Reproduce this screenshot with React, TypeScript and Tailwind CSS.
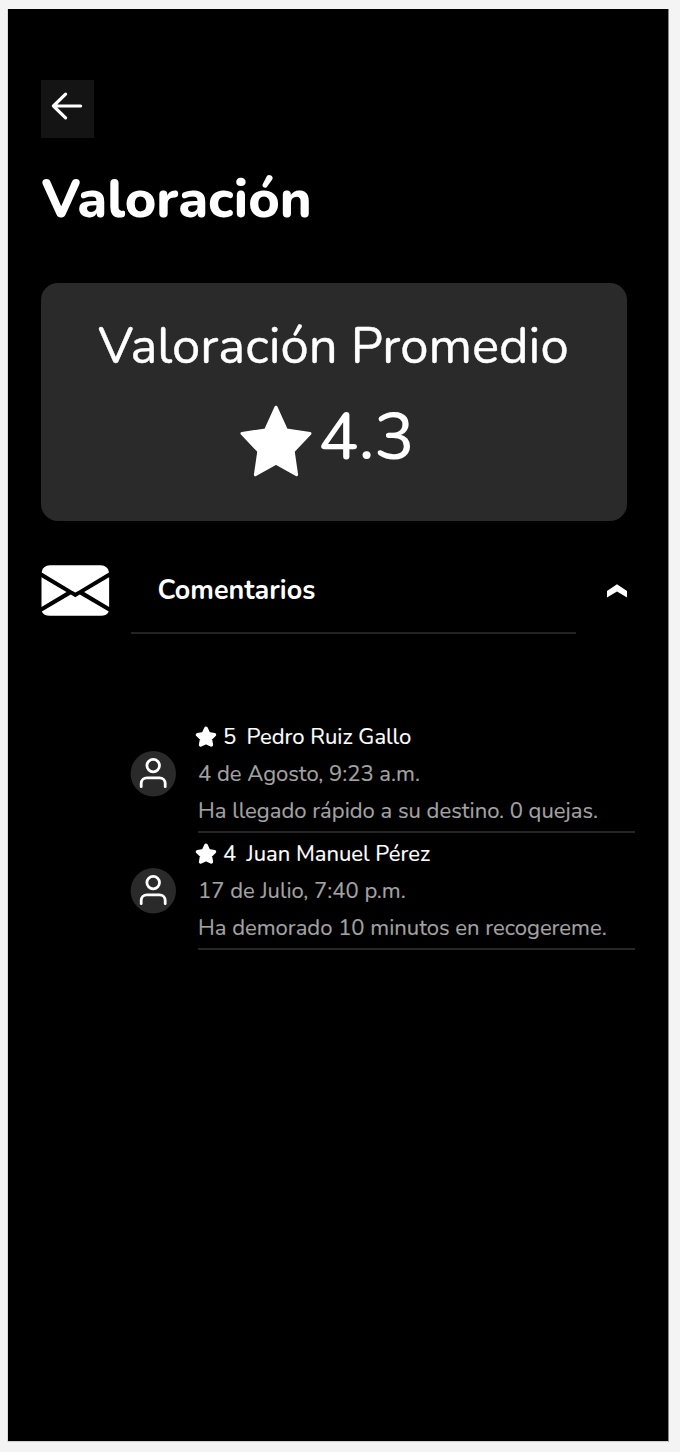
type Comment = {
  score: number;
  name: string;
  date: string;
  text: string;
};

const comments: Comment[] = [
  {
    score: 5,
    name: "Pedro Ruiz Gallo",
    date: "4 de Agosto, 9:23 a.m.",
    text: "Ha llegado rápido a su destino. 0 quejas.",
  },
  {
    score: 4,
    name: "Juan Manuel Pérez",
    date: "17 de Julio, 7:40 p.m.",
    text: "Ha demorado 10 minutos en recogereme.",
  },
];

function ArrowLeftIcon() {
  return (
    <svg width="32" height="30" viewBox="0 0 32 30" fill="none" stroke="white" strokeWidth="3.2" strokeLinecap="round" strokeLinejoin="round">
      <path d="M14.6 3.2 2.4 15l12.2 11.8M2.4 15h27.2" />
    </svg>
  );
}

function BigStar() {
  return (
    <svg width="72" height="72" viewBox="0 0 72 72" fill="white" stroke="white" strokeWidth="3" strokeLinejoin="round">
      <path d="M36 2.2 46.4 25 70 28.4 53.2 46.2 56.6 69.7 36 58.2 15.4 69.7 18.8 46.2 2 28.4 25.6 25Z" />
    </svg>
  );
}

function SmallStar() {
  return (
    <svg className="-mt-px shrink-0" width="22" height="22" viewBox="0 0 22 22" fill="white" stroke="white" strokeWidth="3.6" strokeLinejoin="round">
      <path d="M11 2.4 13.6 7.8 19.4 8.7 15.3 12.8 16.3 18.9 11 16.3 5.7 18.9 6.7 12.8 2.6 8.7 8.4 7.8Z" />
    </svg>
  );
}

function EnvelopeIcon() {
  return (
    <svg width="69" height="51" viewBox="-.5 0 69 51">
      <path fill="white" d="M.2 7.5C.6 3.2 4 .2 8.4.2h50.8c4.4 0 7.8 3 8.2 7.3L38 25.3 33.8 27.6 29.6 25.3Z" />
      <path fill="white" d="M0 12.2 25 27 0 42Z" />
      <path fill="white" d="M67.6 12.2 42.6 27 67.6 42Z" />
      <path fill="white" d="M.3 46.5 29.3 29.6 33.8 32.2l4.5-2.6 29 16.9c-1 2.8-3.9 4.3-8 4.3H8.4C4.2 50.8 1.3 49.3.3 46.5Z" />
    </svg>
  );
}

function ChevronUpIcon() {
  return (
    <svg width="20" height="14" viewBox="0 0 20 14" fill="white">
      <path d="M0 7 10 .2 20 7v6.4L10 7.4 0 13.4Z" />
    </svg>
  );
}

function Avatar() {
  return (
    <svg className="shrink-0" width="46" height="46" viewBox="0 0 46 46" fill="none">
      <circle cx="23.3" cy="22.8" r="22.7" fill="#2a2a2a" />
      <circle cx="23.2" cy="14.6" r="6.3" stroke="white" strokeWidth="2.8" />
      <path d="M11.2 35.7v-3.2c0-3.3 2.4-5.7 5.8-5.7h12.4c3.4 0 5.8 2.4 5.8 5.7v3.2" stroke="white" strokeWidth="2.8" strokeLinecap="round" />
    </svg>
  );
}

function CommentRow({ score, name, date, text }: Comment) {
  return (
    <li className="flex h-[117.2px] items-start">
      <div className="pt-[33px]">
        <Avatar />
      </div>
      <div className="ml-[22px] flex w-[437px] flex-col border-b-[2px] border-[#262626] pt-px pb-px text-[22.05px] leading-[37px] whitespace-nowrap text-[#a3a3a3] [-webkit-text-stroke:0.15px_currentColor]">
        <div className="-ml-[3px] flex items-center text-white">
          <SmallStar />
          <span className="ml-[6px] w-[23.5px]">{score}</span>
          <span>{name}</span>
        </div>
        <p>{date}</p>
        <p>{text}</p>
      </div>
    </li>
  );
}

export default function App() {
  return (
    <div className="h-[1452px] bg-[#f4f4f4] pt-[9px] pl-[7px] font-['Nunito','Lato',sans-serif] text-white">
      <main className="flex h-[1433px] w-[662px] flex-col border-r border-b border-l border-r-[#888888] border-b-[#cfcfcf] border-l-[#dadada] bg-black">
        <header className="pt-[71px] pl-[33px]">
          <button type="button" aria-label="Volver" className="flex h-[58px] w-[53px] justify-start bg-[#141414] pt-[11px] pl-[10px]">
            <ArrowLeftIcon />
          </button>
          <h1 className="mt-[32px] ml-[0.5px] text-[53.7px] leading-[60px] font-extrabold">Valoración</h1>
        </header>

        <section className="mt-[53px] ml-[33.4px] flex h-[238px] w-[585.2px] flex-col items-center rounded-[17px] bg-[#2a2a2a] pt-[29px]">
          <h2 className="-ml-px text-[50.8px] leading-[70px] whitespace-nowrap [-webkit-text-stroke:0.4px_currentColor]">Valoración Promedio</h2>
          <div className="-ml-[13px] flex items-start pt-[17px]">
            <div className="pt-[6px]">
              <BigStar />
            </div>
            <span className="ml-[6px] text-[67.2px] leading-[76px] font-medium">4.3</span>
          </div>
        </section>

        <section className="mt-[44px] flex">
          <div className="ml-[33px]">
            <EnvelopeIcon />
          </div>
          <div className="ml-[20.5px] flex h-[69px] w-[445.5px] items-start border-b-2 border-[#222222] pl-[27px]">
            <h3 className="text-[26.9px] leading-[51px] font-bold">Comentarios</h3>
          </div>
          <div className="ml-[31px] pt-[19px]">
            <ChevronUpIcon />
          </div>
        </section>

        <ul className="mt-[84px] ml-[122px]">
          {comments.map((comment) => (
            <CommentRow key={comment.name} {...comment} />
          ))}
        </ul>
      </main>
    </div>
  );
}
